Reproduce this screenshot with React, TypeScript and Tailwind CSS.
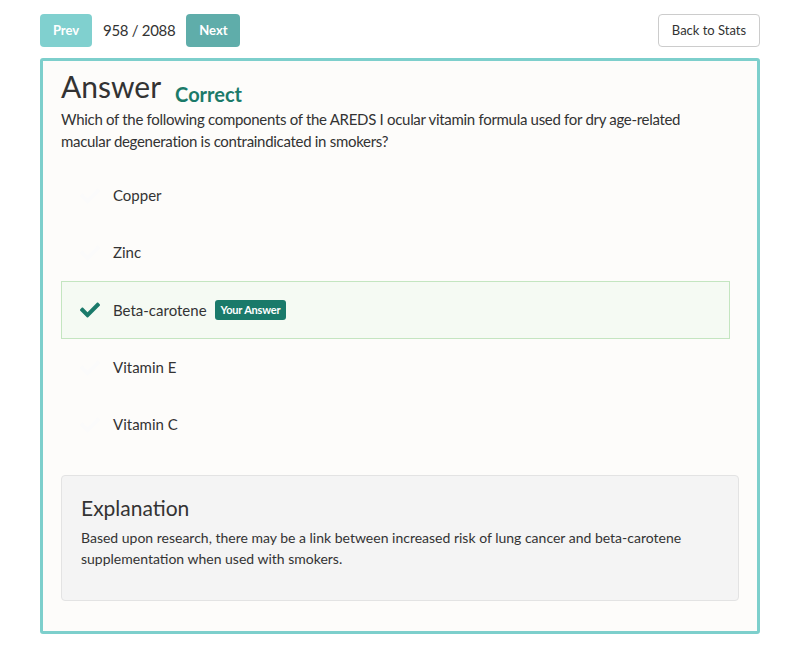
import { FaCheck } from 'react-icons/fa';

const options = [
  { label: 'Copper', picked: false },
  { label: 'Zinc', picked: false },
  { label: 'Beta-carotene', picked: true },
  { label: 'Vitamin E', picked: false },
  { label: 'Vitamin C', picked: false },
];

export default function App() {
  return (
    <div className="min-h-[658px] bg-white px-[40px] pt-[14px] text-[#333] font-['Lato','Noto_Sans',sans-serif]">
      {/* Top nav */}
      <div className="flex items-center justify-between">
        <div className="flex items-center">
          <button className="h-[33px] w-[52px] rounded-[4px] bg-[#80d0cf] text-[13px] font-bold text-white">Prev</button>
          <span className="ml-[11px] mr-[11px] text-[15px] tracking-[-0.3px] text-[#333]">958 / 2088</span>
          <button className="h-[33px] w-[54px] rounded-[4px] bg-[#5fadaa] text-[13px] font-bold text-white">Next</button>
        </div>
        <button className="h-[33px] w-[102px] rounded-[4px] border border-[#ccc] bg-white text-[13px] text-[#333]">Back to Stats</button>
      </div>

      {/* Card */}
      <div className="mt-[11px] h-[576px] rounded-[3px] border-[3px] border-[#7dcfcc] bg-[#fdfcfa] pl-[18px] pr-[18px] pt-[7px]">
        <div className="flex items-end">
          <h1 className="text-[30px] leading-[36px] text-[#333]">Answer</h1>
          <span className="mb-[-5px] ml-[14px] text-[20px] font-bold text-[#1b7a69]">Correct</span>
        </div>
        <p className="mt-[4px] w-[640px] text-[15px] leading-[22px] tracking-[-0.3px] text-[#333]">
          Which of the following components of the AREDS I ocular vitamin formula used for dry age-related macular degeneration is contraindicated in smokers?
        </p>

        <div className="mt-[15px] w-[669px]">
          {options.map((o) => (
            <div
              key={o.label}
              className={
                o.picked
                  ? 'flex h-[58px] items-center border border-[#c4e5c0] bg-[#f5faf3]'
                  : 'flex h-[57px] items-center border border-transparent'
              }
            >
              <div className="flex w-[51px] justify-center pl-[4px]">
                <FaCheck className={o.picked ? 'text-[20px] text-[#1a7a6a]' : 'text-[20px] text-[#fbfbfb]'} />
              </div>
              <span className="text-[15px] text-[#333]">{o.label}</span>
              {o.picked && (
                <span className="ml-[8px] rounded-[3px] bg-[#1a7a6a] px-[6px] py-[2px] text-[11px] font-bold tracking-[-0.2px] text-white">Your Answer</span>
              )}
            </div>
          ))}
        </div>

        <div className="mt-[22px] h-[126px] rounded-[4px] border border-[#e3e3e3] bg-[#f4f4f4] px-[19px] pt-[19px]">
          <h2 className="text-[21px] leading-[26px] text-[#333]">Explanation</h2>
          <p className="mt-[6px] text-[14px] leading-[21px] text-[#333]">
            Based upon research, there may be a link between increased risk of lung cancer and beta-carotene supplementation when used with smokers.
          </p>
        </div>
      </div>
    </div>
  );
}
